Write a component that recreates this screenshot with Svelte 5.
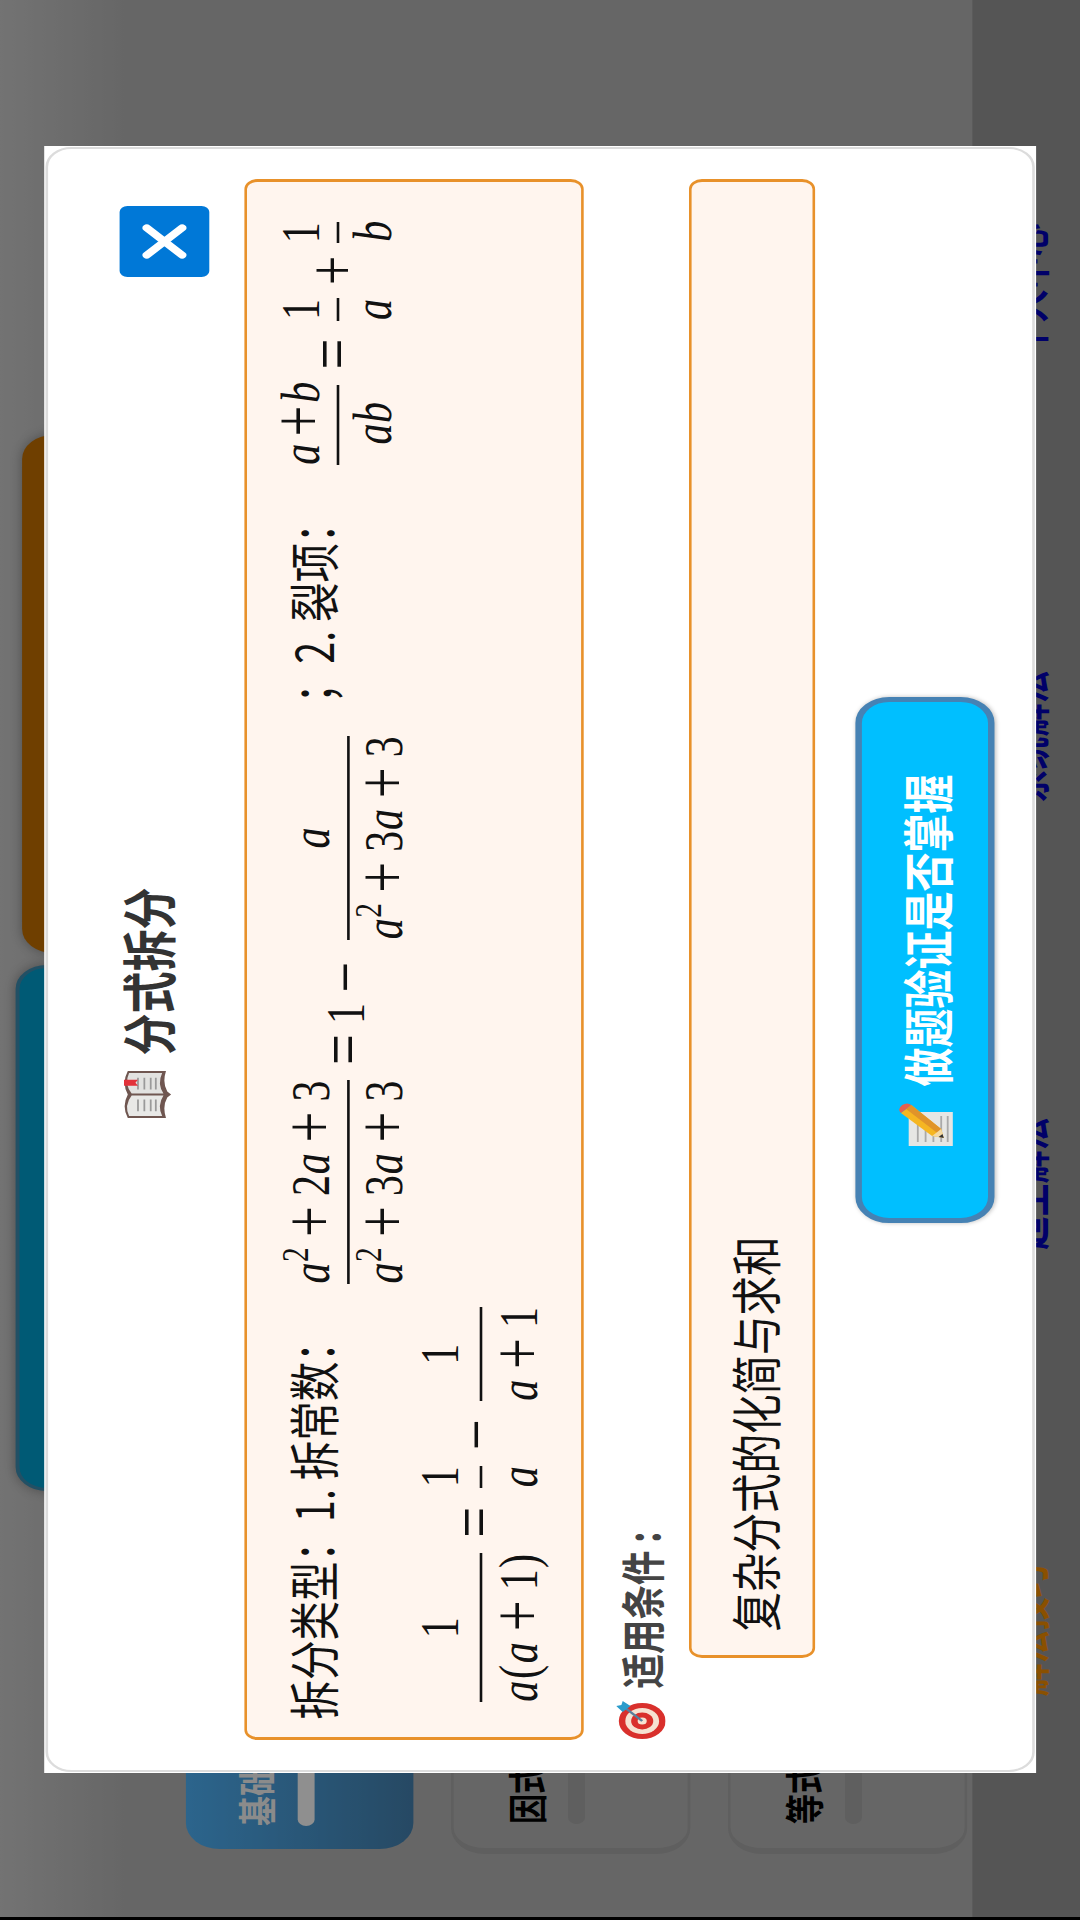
<script>
	const cards = [
		{ label: '基础知识', active: true },
		{ label: '因式分解', active: false },
		{ label: '等式变形', active: false }
	];
	const tabs = [
		{ label: '解法技巧', hot: true },
		{ label: '超主解法', hot: false },
		{ label: '系统解法', hot: false },
		{ label: '个人中心', hot: false }
	];

	// turn "a^2+3a" into spans sized like TeX glyphs
	function tokens(src) {
		const out = [];
		for (let i = 0; i < src.length; i++) {
			const c = src[i];
			if (c === '^') {
				out.push({ c: src[++i], k: 'sup' });
			} else if (c === '+' || c === '−') {
				out.push({ c, k: 'op' });
			} else if (c === '(' || c === ')') {
				out.push({ c, k: 'paren' });
			} else if (c === 'b') {
				out.push({ c, k: 'v vb' });
			} else if (/[a-z]/.test(c)) {
				out.push({ c, k: 'v' });
			} else {
				out.push({ c, k: 'n' });
			}
		}
		return out;
	}
</script>

{#snippet expr(src)}
	{#each tokens(src) as t}<span class={t.k}>{t.c}</span>{/each}
{/snippet}

{#snippet frac(top, bottom, kind = '')}
	<span class="frac {kind}">
		<span class="num">{@render expr(top)}</span>
		<span class="den">{@render expr(bottom)}</span>
	</span>
{/snippet}

<div class="screen">
	<div class="stage">
		<div class="page">
			<div class="content">
				<div class="side">
					{#each cards as card}
						<div class="card" class:active={card.active}>
							<div class="card-label">{card.label}</div>
							<div class="card-bar"></div>
						</div>
					{/each}
				</div>
				<div class="big teal"></div>
				<div class="big brown"></div>
			</div>
			<div class="tabbar">
				{#each tabs as tab}
					<div class="tab" class:hot={tab.hot}>{tab.label}</div>
				{/each}
			</div>
		</div>

		<div class="overlay">
			<div class="modal">
				<div class="modal-inner">
					<div class="head">
						<h2>
							<svg class="book" viewBox="0 0 48 38" aria-hidden="true">
								<path d="M0 4 Q12 -1 24 4 Q36 -1 48 4 V34 Q36 31 27 35 L24 38 L21 35 Q12 31 0 34 Z" fill="#6f5650" />
								<path d="M2 5 Q13 1 23 7 V32 Q13 27 2 31 Z" fill="#e8e8e6" />
								<path d="M25 7 Q35 1 46 5 V31 Q35 27 25 32 Z" fill="#e2e2e0" />
								<path d="M7 12 H19 M7 17 H19 M7 22 H19 M7 26 H19 M29 12 H41 M29 17 H41 M29 22 H41 M29 26 H41" stroke="#9a9a9a" stroke-width="1.4" />
								<path d="M33 1 H39 V12 L36 10 L33 12 Z" fill="#e2323a" />
							</svg>
							<span>分式拆分</span>
						</h2>
						<button class="close" aria-label="关闭">
							<svg viewBox="0 0 36 36" aria-hidden="true">
								<path d="M4 4 L32 32 M32 4 L4 32" stroke="#fff" stroke-width="7" stroke-linecap="round" />
							</svg>
						</button>
					</div>

					<div class="box formulas">
						<div class="row">
							<span class="t">拆分类型：1. 拆常数：</span>
							<span class="math group-a">
								{@render frac('a^2+2a+3', 'a^2+3a+3')}
								<span class="rel">=</span>
								<span class="n lone">1</span>
								<span class="op lone wide">−</span>
								{@render frac('a', 'a^2+3a+3')}
							</span>
							<span class="t after">；2. 裂项：</span>
							<span class="math group-b">
								{@render frac('a+b', 'ab', 'tight')}
								<span class="rel">=</span>
								{@render frac('1', 'a')}
								<span class="op lone small">+</span>
								{@render frac('1', 'b')}
							</span>
						</div>
						<div class="row second">
							<span class="math">
								{@render frac('1', 'a(a+1)', 'tall')}
								<span class="rel">=</span>
								{@render frac('1', 'a', 'tall')}
								<span class="op lone">−</span>
								{@render frac('1', 'a+1', 'tall')}
							</span>
						</div>
					</div>

					<div class="label">
						<svg class="target" viewBox="0 0 38 38" aria-hidden="true">
							<circle cx="18" cy="20" r="18" fill="#d9302c" />
							<circle cx="18" cy="20" r="13" fill="#f6e2d2" />
							<circle cx="18" cy="20" r="8.5" fill="#d9302c" />
							<circle cx="18" cy="20" r="3.5" fill="#f6e2d2" />
							<path d="M18 20 L31 7" stroke="#5a7f9c" stroke-width="2" />
							<path d="M27 5 L33 0 L34 4 L38 5 L33 11 Z" fill="#2b9ccc" />
						</svg>
						<span>适用条件 :</span>
					</div>

					<div class="box cond">复杂分式的化简与求和</div>

					<button class="check">
						<svg class="memo" viewBox="0 0 43 42" aria-hidden="true">
							<rect x="0" y="8" width="34" height="34" fill="#e6e6e4" />
							<path d="M4 15 H22 M4 21 H18 M4 27 H14 M4 33 H30 M4 38 H30" stroke="#a9a9a9" stroke-width="1.4" />
							<path d="M33 2 L41 10 L17 33 L8 35 L10 26 Z" fill="#f5b622" />
							<path d="M37 6 L41 10 L17 33 L13 30 Z" fill="#e0942a" />
							<path d="M10 26 L17 33 L8 35 Z" fill="#f3d9a4" />
							<path d="M9 31 L12 34 L8 35 Z" fill="#333" />
							<path d="M33 2 Q37 -1 41 3 Q44 7 41 10 Z" fill="#e4604f" />
						</svg>
						<span>做题验证是否掌握</span>
					</button>
				</div>
			</div>
		</div>
	</div>
</div>

<style>
	:global(body) {
		background: #000;
	}
	.screen {
		width: 1080px;
		height: 1920px;
		overflow: hidden;
		background: #000;
	}
	/* the app was captured sideways and stretched */
	.stage {
		position: relative;
		width: 1920px;
		height: 831px;
		transform-origin: 0 0;
		transform: translateY(1920px) rotate(-90deg) scale(1, 1.3);
		font-family: 'Noto Sans CJK SC', 'Noto Sans', sans-serif;
	}
	.page {
		height: 100%;
		margin-left: 3px;
		display: flex;
		flex-direction: column;
		background: linear-gradient(180deg, #c0c0c0 0, #aaa 100px);
		overflow: hidden;
	}
	.content {
		flex: 1;
		min-height: 0;
		display: flex;
		gap: 12px;
		padding-left: 63px;
	}
	.side {
		width: 348px;
		display: flex;
		flex-direction: column;
		gap: 29px;
		padding-top: 143px;
		margin-right: 3px;
	}
	.card {
		flex: none;
		height: 184px;
		box-sizing: border-box;
		padding: 40px 0 0 24px;
		border: 2px solid #9e9e9e;
		border-left-width: 6px;
		border-radius: 26px;
		font-size: 30px;
		line-height: 30px;
		font-weight: 700;
		color: #000;
		white-space: nowrap;
	}
	.card.active {
		height: 175px;
		margin-left: 5px;
		padding: 38px 0 0 23px;
		border: 0;
		background: linear-gradient(180deg, #4aa8ea, #407aa6);
		color: #e8e8e8;
	}
	.card-bar {
		height: 13px;
		margin-top: 18px;
		border-radius: 7px;
		background: #9e9e9e;
	}
	.active .card-bar {
		background: #eee;
	}
	.big {
		flex: none;
		height: 400px;
		box-sizing: border-box;
		border-radius: 24px;
		box-shadow: 0 0 10px rgba(0, 0, 0, 0.3);
	}
	.teal {
		width: 526px;
		margin-top: 12px;
		background: #0096c3;
		border: 3px solid #3a86a8;
	}
	.brown {
		width: 518px;
		margin-top: 17px;
		background: #b96900;
	}
	.tabbar {
		flex: none;
		height: 83px;
		margin-left: -3px;
		padding: 0 66px;
		display: flex;
		align-items: center;
		background: #8e8e8e;
	}
	.tab {
		flex: 1;
		text-align: center;
		font-size: 33px;
		font-weight: 700;
		color: #0000b0;
	}
	.tab.hot {
		color: #e68500;
	}
	.overlay {
		position: absolute;
		inset: 0;
		display: flex;
		align-items: center;
		justify-content: center;
		background: rgba(0, 0, 0, 0.4);
	}
	.modal {
		width: 1627px;
		height: 763px;
		box-sizing: border-box;
		padding: 1px;
		background: #fff;
	}
	.modal-inner {
		height: 100%;
		box-sizing: border-box;
		padding: 0 30px;
		display: flex;
		flex-direction: column;
		align-items: flex-start;
		background: #fff;
		border: 2px solid #dcdcdc;
		border-radius: 20px;
	}
	.head {
		align-self: stretch;
		display: flex;
		align-items: flex-start;
		padding: 55px 27px 0 13px;
	}
	h2 {
		flex: 1;
		margin: 0;
		display: flex;
		align-items: center;
		justify-content: center;
		gap: 15px;
		font-size: 42px;
		line-height: 42px;
		font-weight: 700;
		color: #333;
	}
	.book {
		width: 47px;
		height: 38px;
	}
	.close {
		width: 71px;
		height: 69px;
		padding: 0;
		border: 0;
		border-radius: 6px;
		background: #0078d7;
		display: flex;
		align-items: center;
		justify-content: center;
	}
	.close svg {
		width: 35px;
		height: 35px;
	}
	.box {
		box-sizing: border-box;
		background: #fff5ee;
		border-style: solid;
		border-color: #e8912a;
		border-width: 2px 3px;
		border-radius: 10px;
		color: #111;
		font-size: 39.5px;
		line-height: 39px;
	}
	.formulas {
		align-self: stretch;
		margin-top: 27px;
		height: 261px;
		padding: 18px 0 0 18px;
	}
	.row {
		display: flex;
		align-items: flex-start;
		white-space: nowrap;
	}
	.t {
		margin-top: 12px;
	}
	.t.after {
		margin-left: 28px;
	}
	.math {
		display: inline-flex;
		align-items: center;
		font-family: 'Liberation Serif', serif;
		font-size: 42px;
		line-height: 42px;
		color: #111;
	}
	.group-a {
		margin: 10px 0 0 33px;
	}
	.group-b {
		margin: 2px 0 0 33px;
	}
	.second {
		margin: 1px 0 0 12px;
	}
	.frac {
		display: inline-flex;
		flex-direction: column;
		margin: 0 0.12em;
	}
	.num {
		display: block;
		padding-bottom: 7px;
		text-align: center;
	}
	.den {
		display: block;
		padding-top: 5px;
		border-top: 2px solid #111;
		text-align: center;
	}
	.tall .num {
		padding-bottom: 10px;
	}
	.tall .den {
		padding-top: 7px;
	}
	.frac span span {
		display: inline-block;
		text-align: center;
	}
	.v {
		display: inline-block;
		width: 0.53em;
		font-style: italic;
		text-align: center;
	}
	.vb {
		width: 0.43em;
	}
	.n {
		display: inline-block;
		width: 0.5em;
		text-align: center;
	}
	.paren {
		display: inline-block;
		width: 0.39em;
		text-align: center;
	}
	.sup {
		display: inline-block;
		width: 0.5em;
		font-size: 0.7em;
		line-height: 0;
		vertical-align: 0.55em;
		text-align: center;
	}
	.op {
		display: inline-block;
		width: 0.6em;
		margin: 0 0.17em;
		font-size: 1.3em;
		line-height: 0;
		vertical-align: -0.05em;
		text-align: center;
	}
	.tight .op {
		width: 0.5em;
		margin: 0 0.12em;
	}
	.rel {
		display: inline-block;
		width: 0.6em;
		margin: 0 0.17em 7px;
		font-size: 1.3em;
		line-height: 42px;
		text-align: center;
	}
	.group-b .rel {
		margin-right: 0.22em;
	}
	.second .rel {
		margin-right: 13px;
	}
	.lone {
		margin-bottom: 3px;
		line-height: 42px;
	}
	.second .op.lone {
		margin-right: 12px;
	}
	.op.wide {
		margin-right: 16px;
	}
	.op.small {
		width: 30px;
		margin: 0 7px 7px 8px;
		font-size: 52px;
	}
	.label {
		margin-top: 25px;
		display: flex;
		align-items: center;
		gap: 13px;
		font-size: 34.5px;
		line-height: 38px;
		font-weight: 700;
		color: #444;
		white-space: pre;
	}
	.target {
		width: 38px;
		height: 38px;
		margin-left: 1px;
	}
	.cond {
		align-self: stretch;
		margin: 18px 0 0 82px;
		height: 97px;
		padding: 28px 0 0 24px;
	}
	.check {
		align-self: center;
		margin-top: 31px;
		width: 526px;
		height: 107px;
		box-sizing: border-box;
		padding: 0;
		border: 5px solid #4682b4;
		border-radius: 26px;
		background: #00bfff;
		box-shadow: 0 1px 4px rgba(0, 0, 0, 0.25);
		display: flex;
		align-items: center;
		justify-content: center;
		gap: 16px;
		font-family: inherit;
		font-size: 39px;
		font-weight: 700;
		color: #fff;
	}
	.memo {
		width: 43px;
		height: 42px;
	}
</style>
